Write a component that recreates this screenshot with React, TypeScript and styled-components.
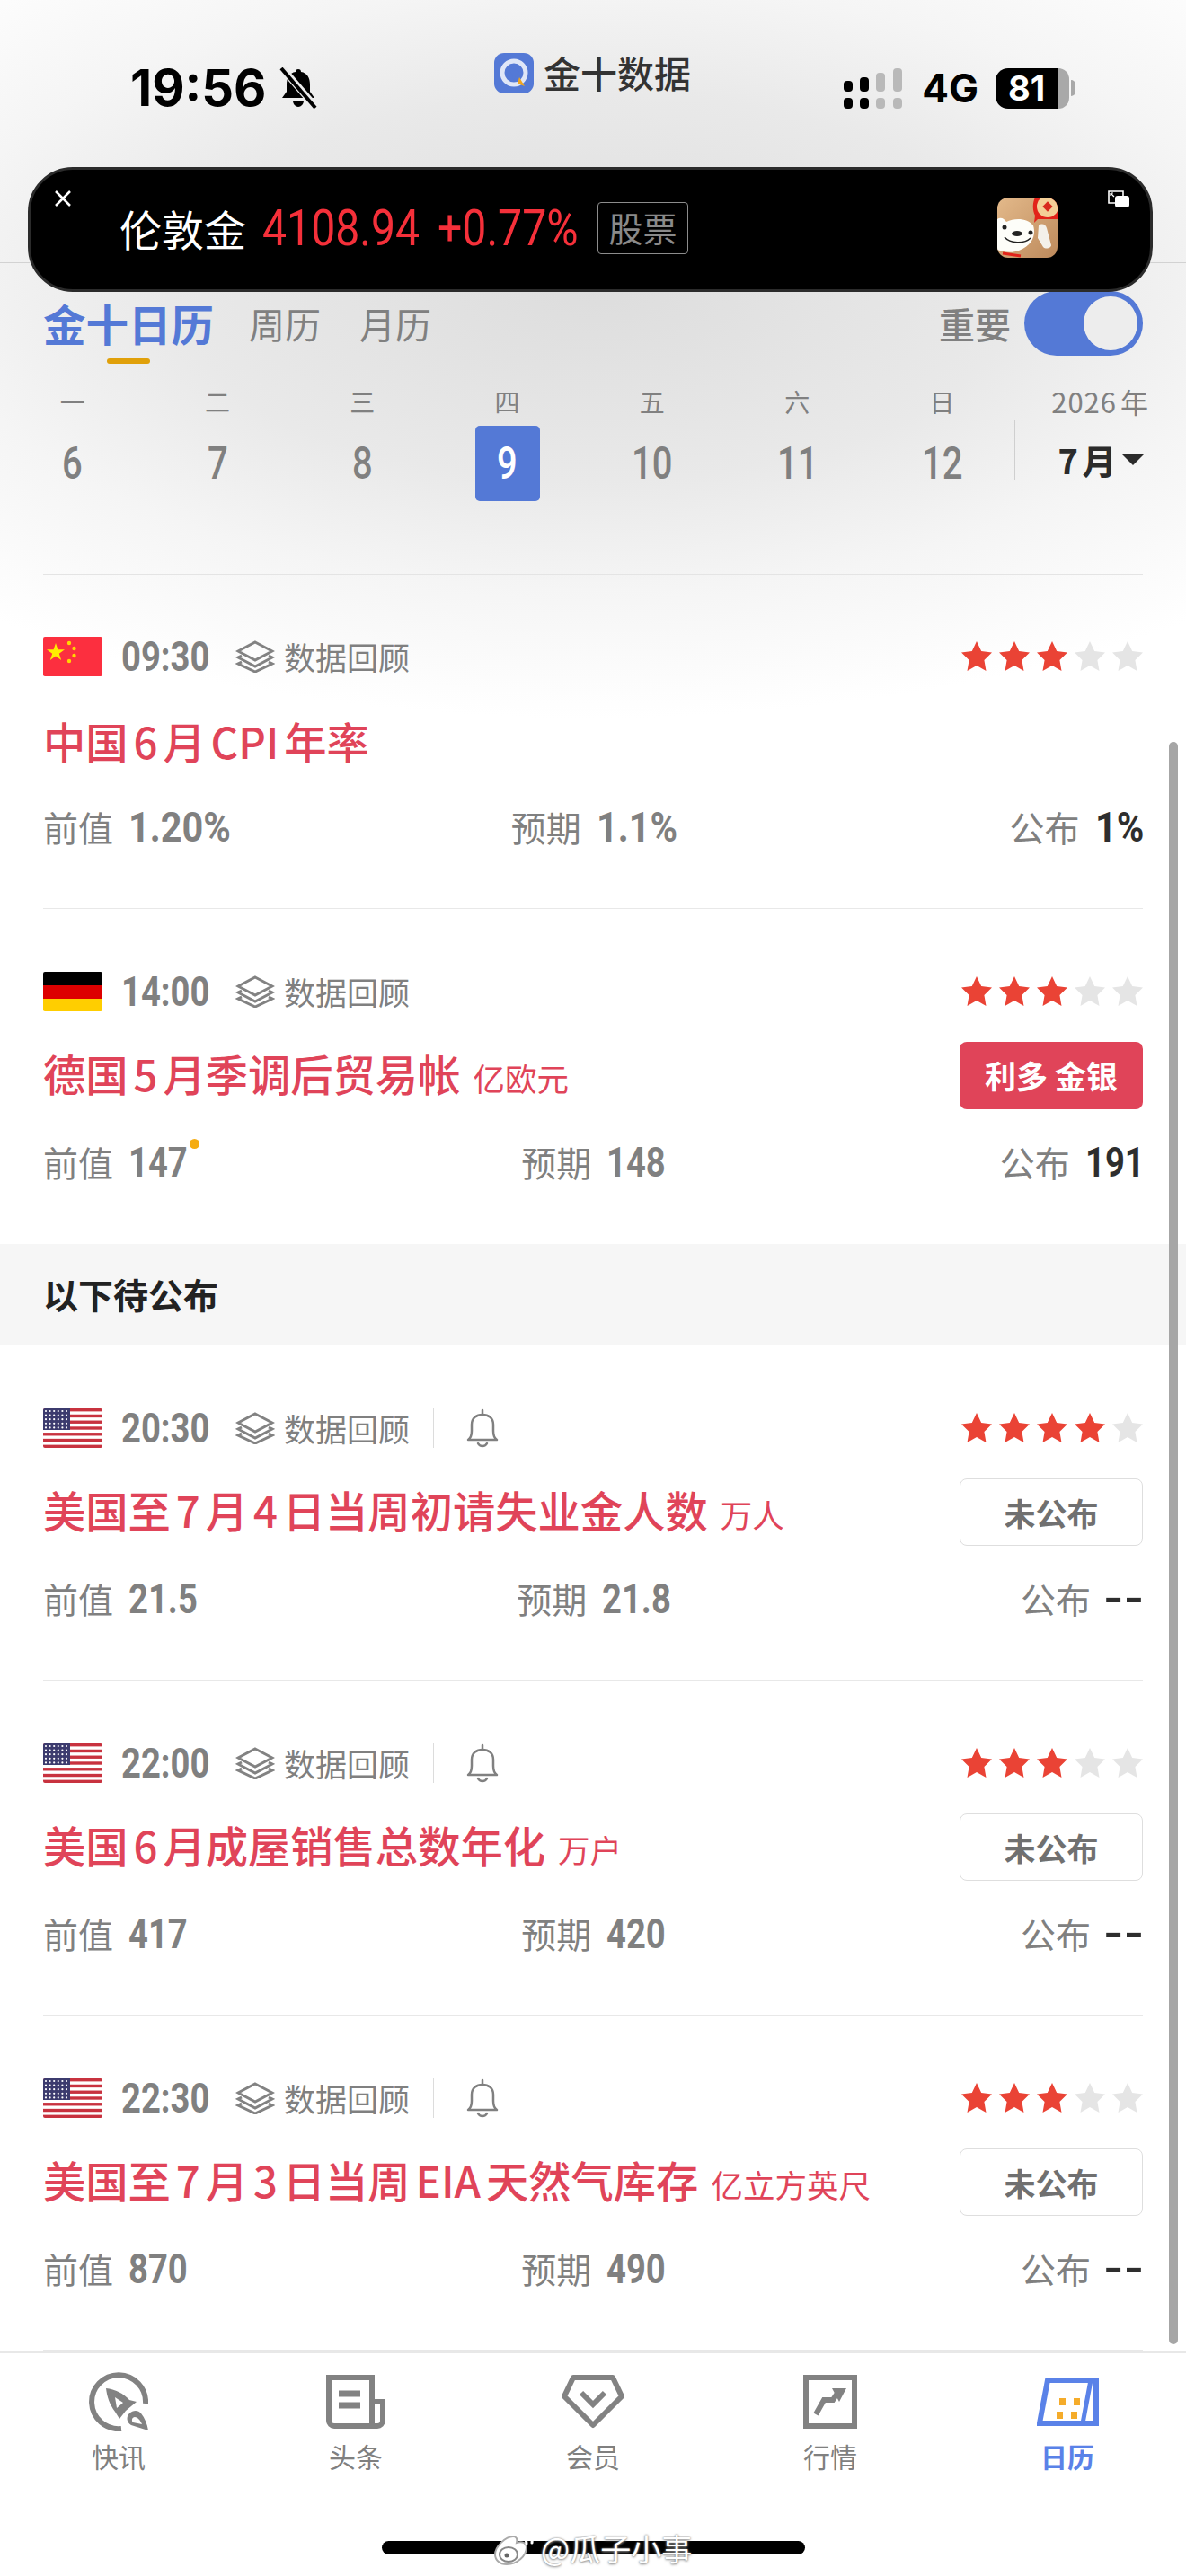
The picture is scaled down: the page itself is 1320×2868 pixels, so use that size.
import React from 'react';
import styled, { createGlobalStyle } from 'styled-components';

const CJK = `"Noto Sans CJK SC", "Noto Sans", sans-serif`;
const DIGITS = `Roboto, "Noto Sans CJK SC", sans-serif`;
const BLUE = '#5479d6';
const RED = '#e04459';
const GREY = '#808080';

const GlobalStyle = createGlobalStyle`
  html, body {
    margin: 0;
    padding: 0;
    background: #fff;
  }
  body {
    font-family: ${CJK};
    text-autospace: normal;
  }
`;

const Page = styled.div`
  position: relative;
  width: 1320px;
  height: 2868px;
  overflow: hidden;
  display: flex;
  flex-direction: column;
  background: radial-gradient(
    ellipse 1050px 480px at 50% 320px,
    #dddddd 0%,
    #e9e9e9 45%,
    #f5f5f5 70%,
    #ffffff 100%
  );
`;

/* the app font has narrow digits, no installed font does, so they get squeezed */
const CondensedBox = styled.span`
  display: inline-block;
  white-space: nowrap;
`;

const CondensedText = styled.span<{ $ratio: number }>`
  display: inline-block;
  transform: scaleX(${(p) => p.$ratio});
  transform-origin: 0 50%;
`;

const glyphWidth = (c: string) => {
  if (c === '.') return 0.263;
  if (c === ':') return 0.242;
  if (c === '%') return 0.73;
  if (c === '+') return 0.565;
  return 0.5615;
};

const Condensed = ({ text, size, ratio }: { text: string; size: number; ratio?: number }) => {
  const scale = ratio ?? (text.includes('%') ? 0.9 : 0.83);
  const width = text.split('').reduce((sum, c) => sum + glyphWidth(c), 0) * size * scale;
  return (
    <CondensedBox style={{ width }}>
      <CondensedText $ratio={scale}>{text}</CondensedText>
    </CondensedBox>
  );
};

/* status bar */
const TopBar = styled.header`
  height: 293px;
  flex: none;
  box-sizing: border-box;
  border-bottom: 1px solid #d2d2d2;
`;

const StatusRow = styled.div`
  display: grid;
  grid-template-columns: 405px auto 1fr;
  padding: 59px 123px 0 145px;
`;

const Clock = styled.div`
  display: flex;
  align-items: center;
  gap: 14px;
  height: 62px;
  margin-top: 8px;
  font: 700 56px Inter, "Liberation Sans", sans-serif;
  color: #000;
`;

const AppName = styled.div`
  display: flex;
  align-items: flex-start;
  gap: 11px;
  font-size: 41px;
  line-height: 42px;
  font-weight: 500;
  color: #333;
`;

const Indicators = styled.div`
  display: flex;
  align-items: center;
  justify-content: flex-end;
  height: 62px;
  margin-top: 8px;
`;

const Net = styled.span`
  font: 700 44px Inter, "Liberation Sans", sans-serif;
  margin: 0 19px 0 22px;
  color: #000;
`;

const Battery = styled.div`
  position: relative;
  width: 69px;
  height: 45px;
  border-radius: 14px 0 0 14px;
  background: #000;
  color: #fff;
  font: 700 38px/45px Inter, "Liberation Sans", sans-serif;
  text-align: center;
`;

const BatteryRest = styled.div`
  width: 13px;
  height: 45px;
  border-radius: 0 12px 12px 0;
  background: #a9a9a9;
`;

const BatteryCap = styled.div`
  width: 5px;
  height: 18px;
  margin-left: 2px;
  border-radius: 0 5px 5px 0;
  background: #a9a9a9;
`;

/* floating ticker */
const Ticker = styled.div`
  position: absolute;
  left: 31px;
  top: 186px;
  width: 1252px;
  height: 139px;
  box-sizing: border-box;
  display: flex;
  align-items: center;
  padding: 0 0 4px 99px;
  border: 3px solid #2b2b2b;
  border-radius: 50px;
  background: #000;
`;

const TickerName = styled.span`
  font-size: 47px;
  color: #fff;
  margin-right: 18px;
`;

const TickerFigure = styled.span`
  font: 400 56px ${DIGITS};
  color: #f5303a;
  margin-right: 20px;
`;

const TickerChip = styled.span`
  width: 101px;
  height: 58px;
  margin-left: 2px;
  box-sizing: border-box;
  border: 1px solid #8c8c8c;
  border-radius: 4px;
  font-size: 38px;
  line-height: 54px;
  text-align: center;
  color: #8a8a8a;
`;

const TickerMascot = styled.svg`
  margin-left: auto;
  margin-right: 103px;
  border-radius: 12px;
`;

const TickerClose = styled.svg`
  position: absolute;
  left: 27px;
  top: 23px;
`;

const TickerExpand = styled.svg`
  position: absolute;
  right: 23px;
  top: 22px;
`;

/* calendar head */
const Calendar = styled.section`
  height: 282px;
  flex: none;
  box-sizing: border-box;
  border-bottom: 1px solid #d8d8d8;
`;

const TabRow = styled.div`
  display: flex;
  align-items: center;
  height: 131px;
  box-sizing: border-box;
  padding: 3px 48px 0;
`;

const ViewTab = styled.div<{ $active?: boolean }>`
  position: relative;
  margin-right: ${(p) => (p.$active ? 39 : 43)}px;
  font-size: ${(p) => (p.$active ? 47.5 : 40)}px;
  line-height: 60px;
  font-weight: ${(p) => (p.$active ? 700 : 400)};
  color: ${(p) => (p.$active ? BLUE : GREY)};
`;

const ActiveMark = styled.i`
  position: absolute;
  left: 71px;
  bottom: -15px;
  width: 48px;
  height: 6px;
  border-radius: 3px;
  background: #e0a00a;
`;

const ImportantLabel = styled.span`
  margin-left: auto;
  font-size: 40px;
  font-weight: 500;
  color: ${GREY};
`;

const Toggle = styled.div`
  width: 132px;
  height: 72px;
  margin: 0 0 0 15px;
  box-sizing: border-box;
  padding: 6px;
  display: flex;
  justify-content: flex-end;
  border-radius: 36px;
  background: ${BLUE};
`;

const ToggleKnob = styled.div`
  width: 60px;
  height: 60px;
  border-radius: 50%;
  background: #ededed;
`;

const WeekRow = styled.div`
  display: flex;
  height: 151px;
`;

const Day = styled.div`
  width: 161.3px;
  display: flex;
  flex-direction: column;
  align-items: center;
`;

const DayName = styled.span`
  height: 50px;
  font-size: 28px;
  line-height: 46px;
  color: ${GREY};
`;

const DayNumber = styled.span<{ $active?: boolean }>`
  width: 72px;
  height: 84px;
  display: flex;
  align-items: center;
  justify-content: center;
  border-radius: 5px;
  font: 500 50px/84px ${DIGITS};
  color: ${(p) => (p.$active ? '#fff' : GREY)};
  background: ${(p) => (p.$active ? BLUE : 'transparent')};
`;

const MonthPicker = styled.div`
  flex: 1;
  display: flex;
  flex-direction: column;
  align-items: center;
`;

const YearLabel = styled.span`
  font-size: 31px;
  line-height: 46px;
  height: 44px;
  letter-spacing: 1px;
  color: ${GREY};
`;

const MonthValue = styled.div`
  align-self: stretch;
  height: 66px;
  box-sizing: border-box;
  padding-top: 20px;
  display: flex;
  align-items: center;
  justify-content: center;
  gap: 6px;
  border-left: 1px solid #cfcfcf;
  font-size: 38px;
  font-weight: 700;
  color: #2b2b2b;
`;

const Caret = styled.i`
  width: 0;
  height: 0;
  margin-top: 2px;
  border-left: 12px solid transparent;
  border-right: 12px solid transparent;
  border-top: 12px solid #2b2b2b;
`;

/* event list */
const List = styled.main`
  flex: 1;
  padding-top: 64px;
`;

const Event = styled.article<{ $top?: boolean; $plain?: boolean }>`
  margin: 0 48px;
  box-sizing: border-box;
  height: 373px;
  padding-top: ${(p) => (p.$top ? 69 : 70)}px;
  border-top: ${(p) => (p.$top ? '1px solid #e4e4e4' : 'none')};
  border-bottom: ${(p) => (p.$plain ? 'none' : '1px solid #e8e8e8')};
`;

const MetaRow = styled.div`
  display: flex;
  align-items: center;
  height: 44px;
`;

const Flag = styled.svg`
  flex: none;
  width: 66px;
  height: 44px;
  border-radius: 2px;
`;

const Time = styled.span`
  width: 96px;
  margin-left: 20px;
  display: flex;
  justify-content: flex-end;
  font: 700 46px ${DIGITS};
  color: ${GREY};
`;

const ReviewIcon = styled.svg`
  margin-left: 32px;
`;

const ReviewText = styled.span`
  margin-left: 10px;
  font-size: 35px;
  line-height: 42px;
  color: ${GREY};
`;

const Separator = styled.i`
  width: 1px;
  height: 44px;
  margin: 0 36px 0 26px;
  background: #dcdcdc;
`;

const Stars = styled.div`
  margin-left: auto;
  display: flex;
  gap: 8px;
`;

const TitleRow = styled.div`
  display: flex;
  align-items: center;
  height: 75px;
  margin-top: 34px;
`;

const Title = styled.h3`
  margin: 0;
  font-size: 47.3px;
  line-height: 60px;
  font-weight: 500;
  color: ${RED};
  white-space: nowrap;
`;

const Unit = styled.span`
  margin-left: 14px;
  font-size: 35.5px;
  font-weight: 400;
`;

const Verdict = styled.div<{ $good?: boolean }>`
  margin-left: auto;
  width: 204px;
  height: 75px;
  box-sizing: border-box;
  border-radius: 8px;
  border: ${(p) => (p.$good ? 'none' : '1px solid #dedede')};
  background: ${(p) => (p.$good ? RED : '#fff')};
  color: ${(p) => (p.$good ? '#fff' : '#707070')};
  font-size: 35px;
  font-weight: 700;
  line-height: 73px;
  text-align: center;
`;

const Values = styled.div`
  display: grid;
  grid-template-columns: 1fr auto 1fr;
  align-items: center;
  height: 46px;
  margin-top: 35px;
`;

const Value = styled.div<{ $end?: boolean }>`
  position: relative;
  justify-self: ${(p) => (p.$end ? 'end' : 'start')};
  font-size: 39px;
  line-height: 46px;
  color: ${GREY};
  white-space: nowrap;
`;

const Figure = styled.span<{ $strong?: boolean }>`
  position: relative;
  display: inline-block;
  margin-left: 17px;
  font: 700 46px/46px ${DIGITS};
  color: ${(p) => (p.$strong ? '#2e2e2e' : GREY)};
`;

const NoFigure = styled.span`
  display: inline-block;
  width: 44px;
  margin-left: 14px;
  font: 700 46px/46px ${DIGITS};
  color: #2e2e2e;
  transform: scaleX(1.25);
  transform-origin: 0 50%;
`;

const RevisedDot = styled.i`
  position: absolute;
  right: -15px;
  top: -3px;
  width: 11px;
  height: 11px;
  border-radius: 50%;
  background: #f5ac12;
`;

const PendingHead = styled.h2`
  margin: 0;
  height: 113px;
  box-sizing: border-box;
  padding-left: 48px;
  background: #f6f6f6;
  font-size: 39px;
  line-height: 110px;
  font-weight: 700;
  color: #222;
`;

const ScrollThumb = styled.i`
  position: absolute;
  left: 1301px;
  top: 826px;
  width: 10px;
  height: 1784px;
  border-radius: 5px;
  background: #a6a6a6;
`;

/* bottom tabs */
const TabBar = styled.nav`
  flex: none;
  height: 250px;
  box-sizing: border-box;
  display: grid;
  grid-template-columns: repeat(5, 264px);
  align-content: start;
  padding-top: 21px;
  border-top: 2px solid #e8e8e8;
`;

const TabItem = styled.div<{ $active?: boolean }>`
  display: flex;
  flex-direction: column;
  align-items: center;
  font-size: 30px;
  line-height: 40px;
  font-weight: ${(p) => (p.$active ? 700 : 400)};
  color: ${(p) => (p.$active ? '#5a82e8' : GREY)};
`;

const TabIcon = styled.div`
  height: 66px;
  margin-bottom: 7px;
  display: flex;
  align-items: center;
`;

const HomeBar = styled.div`
  position: absolute;
  left: 425px;
  top: 2829px;
  width: 471px;
  height: 15px;
  border-radius: 8px;
  background: #000;
`;

const Watermark = styled.div`
  position: absolute;
  left: 548px;
  top: 2816px;
  display: flex;
  align-items: center;
  gap: 8px;
  font-size: 34px;
  line-height: 40px;
  color: #fff;
  text-shadow: 0 0 2px #777, 0 1px 3px #999;
`;

const starPath = 'M17 0l5.2 11 11.8 1.6-8.6 8.3 2.1 12-10.5-5.8-10.5 5.8 2.1-12L0 12.6 11.8 11z';

const StarRating = ({ count }: { count: number }) => (
  <Stars>
    {[0, 1, 2, 3, 4].map((i) => (
      <svg key={i} width="34" height="34" viewBox="0 0 34 34">
        <path d={starPath} fill={i < count ? '#ea4335' : '#e5e5e5'} />
      </svg>
    ))}
  </Stars>
);

const ChinaFlag = () => (
  <Flag viewBox="0 0 66 44">
    <rect width="66" height="44" fill="#fc2f3f" />
    <path d="M14 7l2.4 7.3H24l-6.2 4.5 2.4 7.3-6.2-4.5-6.2 4.5 2.4-7.3L4 14.3h7.6z" fill="#ffed00" />
    <g fill="#ffd800">
      <circle cx="29" cy="7" r="2.2" />
      <circle cx="34.5" cy="13" r="2.2" />
      <circle cx="34.5" cy="21" r="2.2" />
      <circle cx="29" cy="27" r="2.2" />
    </g>
  </Flag>
);

const GermanyFlag = () => (
  <Flag viewBox="0 0 66 44">
    <rect width="66" height="15" fill="#000" />
    <rect y="15" width="66" height="15" fill="#dd0000" />
    <rect y="30" width="66" height="14" fill="#ffce00" />
  </Flag>
);

const UsaFlag = () => {
  const stripes = [0, 1, 2, 3, 4, 5, 6, 7, 8, 9, 10, 11, 12];
  const stars: number[][] = [];
  for (let y = 0; y < 5; y++) {
    for (let x = 0; x < 6; x++) stars.push([3 + x * 4.6, 3 + y * 4.6]);
  }
  return (
    <Flag viewBox="0 0 66 44">
      <rect width="66" height="44" fill="#fff" />
      {stripes
        .filter((s) => s % 2 === 0)
        .map((s) => (
          <rect key={s} y={s * (44 / 13)} width="66" height={44 / 13} fill="#c8323f" />
        ))}
      <rect width="30" height="24" fill="#3c3b6e" />
      {stars.map(([x, y]) => (
        <circle key={`${x}-${y}`} cx={x} cy={y} r="1.1" fill="#fff" />
      ))}
    </Flag>
  );
};

const LayersIcon = () => (
  <ReviewIcon width="44" height="36" viewBox="0 0 44 36" fill="none" stroke="#828282" strokeWidth="3">
    <path d="M22 2L41 12 22 22 3 12z" />
    <path d="M7 17L3 19 22 29 41 19 37 17" />
    <path d="M7 24L3 26 22 35 41 26 37 24" />
  </ReviewIcon>
);

const BellIcon = () => (
  <svg width="36" height="44" viewBox="0 0 36 44" fill="none" stroke="#808080" strokeWidth="2.5">
    <path d="M2 35c3-2 4-5 4-10v-7c0-7 5-11 12-11s12 4 12 11v7c0 5 1 8 4 10z" strokeLinejoin="round" />
    <path d="M18 2v5M13 39c1 2 3 3 5 3s4-1 5-3" strokeLinecap="round" />
  </svg>
);

type EventData = {
  flag: React.ReactNode;
  time: string;
  title: string;
  unit?: string;
  stars: number;
  bell?: boolean;
  verdict?: string;
  good?: boolean;
  prev: string;
  dot?: boolean;
  forecast: string;
  actual: string;
  top?: boolean;
  plain?: boolean;
};

const EventCard = ({ e }: { e: EventData }) => (
  <Event $top={e.top} $plain={e.plain}>
    <MetaRow>
      {e.flag}
      <Time>
        <Condensed text={e.time} size={46} />
      </Time>
      <LayersIcon />
      <ReviewText>数据回顾</ReviewText>
      {e.bell && (
        <>
          <Separator />
          <BellIcon />
        </>
      )}
      <StarRating count={e.stars} />
    </MetaRow>
    <TitleRow>
      <Title>
        {e.title}
        {e.unit && <Unit>{e.unit}</Unit>}
      </Title>
      {e.verdict && <Verdict $good={e.good}>{e.verdict}</Verdict>}
    </TitleRow>
    <Values>
      <Value>
        前值
        <Figure>
          <Condensed text={e.prev} size={46} />
          {e.dot && <RevisedDot />}
        </Figure>
      </Value>
      <Value>
        预期
        <Figure>
          <Condensed text={e.forecast} size={46} />
        </Figure>
      </Value>
      <Value $end>
        公布
        {e.actual === '--' ? (
          <NoFigure>--</NoFigure>
        ) : (
          <Figure $strong>
            <Condensed text={e.actual} size={46} />
          </Figure>
        )}
      </Value>
    </Values>
  </Event>
);

const released: EventData[] = [
  {
    flag: <ChinaFlag />,
    time: '09:30',
    title: '中国6月CPI年率',
    stars: 3,
    prev: '1.20%',
    forecast: '1.1%',
    actual: '1%',
    top: true,
  },
  {
    flag: <GermanyFlag />,
    time: '14:00',
    title: '德国5月季调后贸易帐',
    unit: '亿欧元',
    stars: 3,
    verdict: '利多 金银',
    good: true,
    prev: '147',
    dot: true,
    forecast: '148',
    actual: '191',
    plain: true,
  },
];

const pending: EventData[] = [
  {
    flag: <UsaFlag />,
    time: '20:30',
    title: '美国至7月4日当周初请失业金人数',
    unit: '万人',
    stars: 4,
    bell: true,
    verdict: '未公布',
    prev: '21.5',
    forecast: '21.8',
    actual: '--',
  },
  {
    flag: <UsaFlag />,
    time: '22:00',
    title: '美国6月成屋销售总数年化',
    unit: '万户',
    stars: 3,
    bell: true,
    verdict: '未公布',
    prev: '417',
    forecast: '420',
    actual: '--',
  },
  {
    flag: <UsaFlag />,
    time: '22:30',
    title: '美国至7月3日当周EIA天然气库存',
    unit: '亿立方英尺',
    stars: 3,
    bell: true,
    verdict: '未公布',
    prev: '870',
    forecast: '490',
    actual: '--',
  },
];

const days = [
  ['一', '6'],
  ['二', '7'],
  ['三', '8'],
  ['四', '9'],
  ['五', '10'],
  ['六', '11'],
  ['日', '12'],
];

const tabs = [
  {
    label: '快讯',
    icon: (
      <svg width="66" height="66" viewBox="0 0 66 66" fill="none">
        <path d="M63 35A30 30 0 1 0 36 63" stroke="#828282" strokeWidth="6" />
        <path
          d="M19 18C29 19 39 24 45 31L53 33 41 43 34 52 29 44C23 36 20 27 19 18ZM29 28L31 40 38 34Z"
          fill="#828282"
          fillRule="evenodd"
        />
        <path
          d="M66 65L47 59C42 56 41 50 45 46 49 42 55 42 58 46 62 51 65 58 66 65ZM59 58C57 53 54 50 51 50 48 50 47 54 49 56Z"
          fill="#828282"
          fillRule="evenodd"
        />
      </svg>
    ),
  },
  {
    label: '头条',
    icon: (
      <svg width="66" height="60" viewBox="0 0 66 60" fill="none" stroke="#828282" strokeWidth="6">
        <path d="M3 3h48v54H9a6 6 0 0 1-6-6z" />
        <path d="M51 30h12v21a6 6 0 0 1-6 6h-6" />
        <path d="M14 21h24M14 34h24" strokeWidth="7" />
      </svg>
    ),
  },
  {
    label: '会员',
    icon: (
      <svg width="72" height="60" viewBox="0 0 72 60" fill="none" stroke="#828282" strokeWidth="6">
        <path d="M14 3h44l10 21-32 32L4 24z" strokeLinejoin="round" />
        <path d="M23 20l13 13 13-13" strokeWidth="6" />
      </svg>
    ),
  },
  {
    label: '行情',
    icon: (
      <svg width="60" height="60" viewBox="0 0 60 60" fill="none">
        <rect x="3" y="3" width="54" height="54" stroke="#828282" strokeWidth="6" />
        <path d="M14 44l9-16h10l6-9" stroke="#828282" strokeWidth="6" />
        <path d="M32 15h16l-8 15z" fill="#828282" />
      </svg>
    ),
  },
  {
    label: '日历',
    active: true,
    icon: (
      <svg width="69" height="54" viewBox="0 0 69 54" fill="none">
        <path d="M12 3h54v48H3z" stroke="#5a82e8" strokeWidth="6" />
        <path d="M60 3l-9 48" stroke="#5a82e8" strokeWidth="5" />
        <g fill="#f5ac2a">
          <rect x="25" y="23" width="7" height="8" />
          <rect x="41" y="23" width="7" height="8" />
          <rect x="22" y="38" width="7" height="8" />
          <rect x="38" y="38" width="7" height="8" />
        </g>
      </svg>
    ),
  },
];

export default function App() {
  return (
    <Page>
      <GlobalStyle />
      <TopBar>
        <StatusRow>
          <Clock>
            19:56
            <svg width="44" height="46" viewBox="0 0 44 46">
              <path d="M22 2c2 0 3 1 3 3 7 1 10 7 10 14v8l5 7H4l5-7v-8c0-7 3-13 10-14 0-2 1-3 3-3zM16 37h12c0 4-3 7-6 7s-6-3-6-7z" fill="#000" />
              <path d="M4 1l38 44" stroke="#ececec" strokeWidth="8" />
              <path d="M3 1l38 44" stroke="#000" strokeWidth="4" />
            </svg>
          </Clock>
          <AppName>
            <svg width="44" height="45" viewBox="0 0 44 45">
              <rect width="44" height="45" rx="11" fill="#5479d6" />
              <circle cx="22" cy="22" r="13" fill="none" stroke="#dfe6f7" strokeWidth="5" />
              <path d="M16 15l12 6-4 4-2 6z" fill="#5479d6" />
              <path d="M28 27l6 10-8-3z" fill="#f0a51e" />
            </svg>
            金十数据
          </AppName>
          <Indicators>
            <svg width="65" height="45" viewBox="0 0 65 45">
              <g fill="#000">
                <rect x="0" y="14" width="10" height="12" rx="4" />
                <rect x="18" y="10" width="10" height="16" rx="4" />
                <rect x="0" y="33" width="10" height="12" rx="4" />
                <rect x="18" y="33" width="10" height="12" rx="4" />
              </g>
              <g fill="#b9b9b9">
                <rect x="36" y="5" width="10" height="21" rx="4" />
                <rect x="55" y="0" width="10" height="26" rx="4" />
                <rect x="36" y="33" width="10" height="12" rx="4" />
                <rect x="55" y="33" width="10" height="12" rx="4" />
              </g>
            </svg>
            <Net>4G</Net>
            <Battery>81</Battery>
            <BatteryRest />
            <BatteryCap />
          </Indicators>
        </StatusRow>
      </TopBar>

      <Calendar>
        <TabRow>
          <ViewTab $active>
            金十日历
            <ActiveMark />
          </ViewTab>
          <ViewTab>周历</ViewTab>
          <ViewTab>月历</ViewTab>
          <ImportantLabel>重要</ImportantLabel>
          <Toggle>
            <ToggleKnob />
          </Toggle>
        </TabRow>
        <WeekRow>
          {days.map(([name, num]) => (
            <Day key={name}>
              <DayName>{name}</DayName>
              <DayNumber $active={num === '9'}>
                <Condensed text={num} size={50} ratio={0.8} />
              </DayNumber>
            </Day>
          ))}
          <MonthPicker>
            <YearLabel>2026年</YearLabel>
            <MonthValue>
              7月
              <Caret />
            </MonthValue>
          </MonthPicker>
        </WeekRow>
      </Calendar>

      <List>
        {released.map((e) => (
          <EventCard key={e.time} e={e} />
        ))}
        <PendingHead>以下待公布</PendingHead>
        {pending.map((e) => (
          <EventCard key={e.time} e={e} />
        ))}
      </List>

      <TabBar>
        {tabs.map((t) => (
          <TabItem key={t.label} $active={t.active}>
            <TabIcon>{t.icon}</TabIcon>
            {t.label}
          </TabItem>
        ))}
      </TabBar>

      <Ticker>
        <TickerClose width="18" height="18" viewBox="0 0 18 18" stroke="#fff" strokeWidth="2.5">
          <path d="M1 1l16 16M17 1L1 17" />
        </TickerClose>
        <TickerName>伦敦金</TickerName>
        <TickerFigure>
          <Condensed text="4108.94" size={56} ratio={0.86} />
        </TickerFigure>
        <TickerFigure>
          <Condensed text="+0.77%" size={56} ratio={0.86} />
        </TickerFigure>
        <TickerChip>股票</TickerChip>
        <TickerMascot width="67" height="67" viewBox="0 0 67 67">
          <defs>
            <linearGradient id="mascotBg" x1="0" y1="0" x2="1" y2="1">
              <stop offset="0" stopColor="#e3b98a" />
              <stop offset="1" stopColor="#bd8a5c" />
            </linearGradient>
          </defs>
          <rect width="67" height="67" fill="url(#mascotBg)" />
          <path d="M42 0h25v24H45l-4 4 1-8c-3-6-3-14 0-20z" fill="#e2231a" />
          <circle cx="56" cy="10" r="12" fill="#f4cf97" />
          <rect x="52" y="6" width="8" height="8" fill="#d8291d" transform="rotate(45 56 10)" />
          <path d="M0 24c4-3 8 0 10 3 10-5 24-4 30 4 3 10 0 22-16 28-8 3-16 2-24-1z" fill="#fdfdf9" />
          <path d="M46 31c4-3 8-1 9 3l5 19c0 3-6 5-9 2l-6-10z" fill="#f4f1ea" />
          <ellipse cx="22" cy="40" rx="6" ry="3" fill="#222" />
          <circle cx="37" cy="39" r="2.5" fill="#222" />
          <circle cx="8" cy="33" r="2.5" fill="#222" />
          <path d="M8 44c6 7 22 8 29 1" fill="none" stroke="#222" strokeWidth="1.5" />
          <path d="M6 62l20 3" stroke="#e2231a" strokeWidth="3" />
        </TickerMascot>
        <TickerExpand width="25" height="21" viewBox="0 0 25 21" fill="none">
          <path d="M12 15H2V2h16v5" stroke="#fff" strokeWidth="1.6" />
          <rect x="9" y="7" width="16" height="13" rx="3" fill="#fff" />
          <path d="M4 4l4 4M4 4h3M4 4v3" stroke="#fff" strokeWidth="1.2" />
        </TickerExpand>
      </Ticker>

      <ScrollThumb />
      <HomeBar />
      <Watermark>
        <svg width="46" height="42" viewBox="0 0 46 42" fill="none">
          <path d="M3 28c0-9 12-20 20-20 4 0 5 3 4 7 6-2 11 0 11 5 0 10-11 19-22 19C8 39 3 34 3 28z" fill="#fff" stroke="#aaa" strokeWidth="2" />
          <ellipse cx="18" cy="28" rx="10" ry="8" fill="#fff" stroke="#888" strokeWidth="2" />
          <circle cx="16" cy="29" r="2.5" fill="#666" />
          <path d="M30 9c4-1 8 2 8 7M31 2c7-1 14 5 13 13" stroke="#fff" strokeWidth="3" strokeLinecap="round" />
        </svg>
        @瓜子小事
      </Watermark>
    </Page>
  );
}
